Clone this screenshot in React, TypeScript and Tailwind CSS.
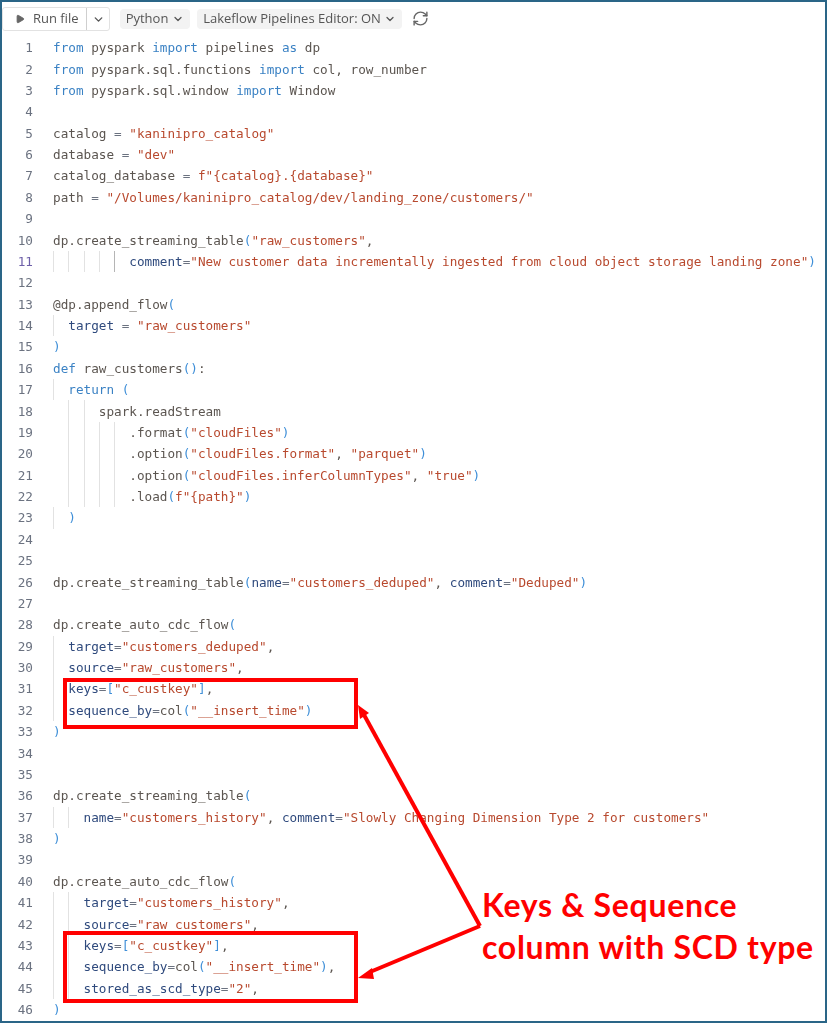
import React from 'react';
import { Play, ChevronDown, RefreshCw } from 'lucide-react';

type Kind = 'kw' | 'txt' | 'str' | 'arg' | 'par' | 'op';

// one token is [kind, text], guides is how many indent bars the line has
interface Line {
  guides?: number;
  skipFirst?: boolean;
  active?: boolean;
  tokens?: [Kind, string][];
}

const kindClass: Record<Kind, string> = {
  kw: 'text-[#3b82c4]',
  txt: 'text-[#5b5550]',
  str: 'text-[#b8492e]',
  arg: 'text-[#2f4a7d]',
  par: 'text-[#3f8fd8]',
  op: 'text-[#6b7280]',
};

const lines: Line[] = [
  { tokens: [['kw', 'from'], ['txt', ' pyspark '], ['kw', 'import'], ['txt', ' pipelines '], ['kw', 'as'], ['txt', ' dp']] },
  { tokens: [['kw', 'from'], ['txt', ' pyspark.sql.functions '], ['kw', 'import'], ['txt', ' col, row_number']] },
  { tokens: [['kw', 'from'], ['txt', ' pyspark.sql.window '], ['kw', 'import'], ['txt', ' Window']] },
  {},
  { tokens: [['txt', 'catalog '], ['op', '= '], ['str', '"kaninipro_catalog"']] },
  { tokens: [['txt', 'database '], ['op', '= '], ['str', '"dev"']] },
  { tokens: [['txt', 'catalog_database '], ['op', '= '], ['str', 'f"{catalog}.{database}"']] },
  { tokens: [['txt', 'path '], ['op', '= '], ['str', '"/Volumes/kaninipro_catalog/dev/landing_zone/customers/"']] },
  {},
  { tokens: [['txt', 'dp.create_streaming_table'], ['par', '('], ['str', '"raw_customers"'], ['txt', ',']] },
  { guides: 5, active: true, tokens: [['arg', 'comment'], ['op', '='], ['str', '"New customer data incrementally ingested from cloud object storage landing zone"'], ['par', ')']] },
  {},
  { tokens: [['txt', '@dp.append_flow'], ['par', '(']] },
  { guides: 1, tokens: [['arg', 'target'], ['op', ' = '], ['str', '"raw_customers"']] },
  { tokens: [['par', ')']] },
  { tokens: [['kw', 'def'], ['txt', ' raw_customers'], ['par', '()'], ['txt', ':']] },
  { guides: 1, tokens: [['kw', 'return'], ['par', ' (']] },
  { guides: 3, skipFirst: true, tokens: [['txt', 'spark.readStream']] },
  { guides: 5, skipFirst: true, tokens: [['txt', '.format'], ['par', '('], ['str', '"cloudFiles"'], ['par', ')']] },
  { guides: 5, skipFirst: true, tokens: [['txt', '.option'], ['par', '('], ['str', '"cloudFiles.format"'], ['txt', ', '], ['str', '"parquet"'], ['par', ')']] },
  { guides: 5, skipFirst: true, tokens: [['txt', '.option'], ['par', '('], ['str', '"cloudFiles.inferColumnTypes"'], ['txt', ', '], ['str', '"true"'], ['par', ')']] },
  { guides: 5, skipFirst: true, tokens: [['txt', '.load'], ['par', '('], ['str', 'f"{path}"'], ['par', ')']] },
  { guides: 1, tokens: [['par', ')']] },
  {},
  {},
  { tokens: [['txt', 'dp.create_streaming_table'], ['par', '('], ['arg', 'name'], ['op', '='], ['str', '"customers_deduped"'], ['txt', ', '], ['arg', 'comment'], ['op', '='], ['str', '"Deduped"'], ['par', ')']] },
  {},
  { tokens: [['txt', 'dp.create_auto_cdc_flow'], ['par', '(']] },
  { guides: 1, tokens: [['arg', 'target'], ['op', '='], ['str', '"customers_deduped"'], ['txt', ',']] },
  { guides: 1, tokens: [['arg', 'source'], ['op', '='], ['str', '"raw_customers"'], ['txt', ',']] },
  { guides: 1, tokens: [['arg', 'keys'], ['op', '='], ['par', '['], ['str', '"c_custkey"'], ['par', ']'], ['txt', ',']] },
  { guides: 1, tokens: [['arg', 'sequence_by'], ['op', '='], ['txt', 'col'], ['par', '('], ['str', '"__insert_time"'], ['par', ')']] },
  { tokens: [['par', ')']] },
  {},
  {},
  { tokens: [['txt', 'dp.create_streaming_table'], ['par', '(']] },
  { guides: 2, tokens: [['arg', 'name'], ['op', '='], ['str', '"customers_history"'], ['txt', ', '], ['arg', 'comment'], ['op', '='], ['str', '"Slowly Changing Dimension Type 2 for customers"']] },
  { tokens: [['par', ')']] },
  {},
  { tokens: [['txt', 'dp.create_auto_cdc_flow'], ['par', '(']] },
  { guides: 2, tokens: [['arg', 'target'], ['op', '='], ['str', '"customers_history"'], ['txt', ',']] },
  { guides: 2, tokens: [['arg', 'source'], ['op', '='], ['str', '"raw_customers"'], ['txt', ',']] },
  { guides: 2, tokens: [['arg', 'keys'], ['op', '='], ['par', '['], ['str', '"c_custkey"'], ['par', ']'], ['txt', ',']] },
  { guides: 2, tokens: [['arg', 'sequence_by'], ['op', '='], ['txt', 'col'], ['par', '('], ['str', '"__insert_time"'], ['par', ')'], ['txt', ',']] },
  { guides: 2, tokens: [['arg', 'stored_as_scd_type'], ['op', '='], ['str', '"2"'], ['txt', ',']] },
  { tokens: [['par', ')']] },
];

const Toolbar = () => (
  <div className="flex items-center h-[24px] mt-[5px] text-[13px] text-[#555555] font-['Open_Sans','Noto_Sans',sans-serif]">
    <div className="flex items-center h-[24px] w-[108px] border border-[#e2e2e2] rounded-[3px]">
      <div className="flex items-center gap-[8px] pl-[12px] w-[84px] h-full border-r border-[#cfcfcf]">
        <Play className="w-[10px] h-[10px] fill-[#666666] text-[#666666]" />
        <span>Run file</span>
      </div>
      <div className="flex-1 flex justify-center">
        <ChevronDown className="w-[13px] h-[13px]" strokeWidth={2.5} />
      </div>
    </div>
    <div className="flex items-center justify-center gap-[4px] ml-[10px] w-[70px] h-[20px] rounded-[4px] bg-[#f3f3f3]">
      <span>Python</span>
      <ChevronDown className="w-[12px] h-[12px]" strokeWidth={2.5} />
    </div>
    <div className="flex items-center justify-center gap-[3px] ml-[7px] w-[205px] h-[20px] rounded-[4px] bg-[#f3f3f3] whitespace-nowrap">
      <span>Lakeflow Pipelines Editor: ON</span>
      <ChevronDown className="w-[12px] h-[12px]" strokeWidth={2.5} />
    </div>
    <RefreshCw className="ml-[10px] w-[17px] h-[17px] text-[#666666] -mt-[2px]" strokeWidth={2} />
  </div>
);

const CodeLine = ({ line, n }: { line: Line; n: number }) => (
  <div className="flex h-[21.38px] items-center">
    <span className={`w-[33px] shrink-0 text-right ${line.active ? 'text-[#6d5fa8]' : 'text-[#6b7280]'}`}>{n}</span>
    <div className="flex ml-[20px] h-full items-center whitespace-pre">
      {Array.from({ length: line.guides ?? 0 }).map((_, i) => (
        <span
          key={i}
          className={`w-[15.26px] h-full shrink-0 border-l ${
            line.skipFirst && i === 0
              ? 'border-transparent'
              : line.active && i === 4
                ? 'border-[#b5b5b5]'
                : 'border-[#e2e2e2]'
          }`}
        />
      ))}
      <span>
        {line.tokens?.map(([kind, text], i) => (
          <span key={i} className={kindClass[kind]}>{text}</span>
        ))}
      </span>
    </div>
  </div>
);

export default function App() {
  return (
    <div className="relative w-[827px] h-[1023px] overflow-hidden bg-white border-2 border-[#2a6587]">
      <div className="blur-[0.6px]">
        <Toolbar />
        <div className="mt-[6px] -ml-[2px] font-['DejaVu_Sans_Mono',monospace] text-[12.68px]">
          {lines.map((line, i) => (
            <CodeLine key={i} line={line} n={i + 1} />
          ))}
        </div>
      </div>

      {/* red callout boxes drawn over the code */}
      <div className="absolute left-[61px] top-[676px] w-[295px] h-[51px] border-4 border-[#ff0000]" />
      <div className="absolute left-[61px] top-[929px] w-[295px] h-[72px] border-4 border-[#ff0000]" />

      <svg className="absolute left-[-2px] top-[-2px]" width="827" height="1023" fill="none">
        <path d="M480 926 L363 713" stroke="#ff0000" strokeWidth="4" />
        <path d="M480 926 L370 972" stroke="#ff0000" strokeWidth="4" strokeLinejoin="round" />
        <path d="M358 705 L369 713 L360 719 Z" fill="#ff0000" />
        <path d="M358 978 L372 968 L374 979 Z" fill="#ff0000" />
      </svg>

      <div className="absolute left-[480px] top-[882px] font-['Lato',sans-serif] font-bold text-[32px] tracking-[0.7px] leading-[42px] text-[#ff0000] whitespace-nowrap">
        <div>Keys &amp; Sequence</div>
        <div>column with SCD type</div>
      </div>
    </div>
  );
}
